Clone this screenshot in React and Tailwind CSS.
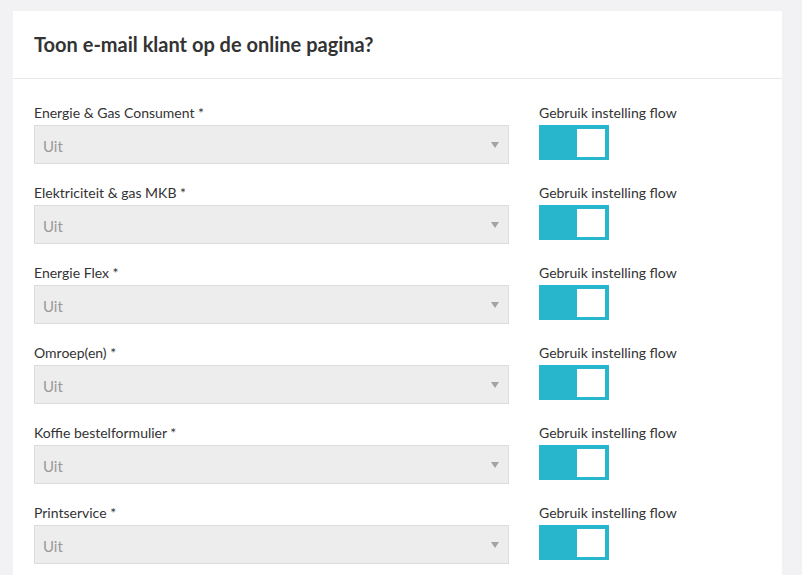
import React from "react";

const rows = [
  "Energie & Gas Consument *",
  "Elektriciteit & gas MKB *",
  "Energie Flex *",
  "Omroep(en) *",
  "Koffie bestelformulier *",
  "Printservice *",
];

function Row({ label }) {
  return (
    <div className="flex h-[80px]">
      <div className="w-[475px] flex flex-col">
        <div className="h-[14px] text-[14px] leading-[14px] text-[#333] mb-[5px] mt-[-1px] whitespace-nowrap">{label}</div>
        <div className="h-[39px] border border-[#dcdcdc] bg-[#ededed] flex items-center justify-between pl-[8px] pr-[9px]">
          <span className="text-[15px] text-[#999] mt-[3px]">Uit</span>
          <svg width="8" height="6" viewBox="0 0 8 6"><path d="M0 0H8L4 6Z" fill="#a3a3a3" /></svg>
        </div>
      </div>
      <div className="ml-[30px] flex flex-col">
        <div className="h-[14px] text-[14px] leading-[14px] text-[#333] mb-[5px] mt-[-1px] whitespace-nowrap">Gebruik instelling flow</div>
        <div className="w-[70px] h-[35px] bg-[#27b6cc] flex justify-end items-start pt-[4px] pr-[4px]">
          <div className="w-[28px] h-[28px] bg-white" />
        </div>
      </div>
    </div>
  );
}

export default function App() {
  return (
    <div className="w-[802px] h-[575px] overflow-hidden bg-[#f2f2f4] pt-[11px] pl-[13px] pr-[20px]" style={{ fontFamily: "Lato, 'Open Sans', sans-serif" }}>
      <div className="bg-white w-[769px] h-[600px]">
        <div className="h-[68px] border-b border-[#e6e6e6] pl-[21px] flex items-center">
          <h1 className="text-[20px] font-bold text-[#333] mt-[-2px]">Toon e-mail klant op de online pagina?</h1>
        </div>
        <div className="pl-[21px] pt-[28px]">
          {rows.map((r) => (
            <Row key={r} label={r} />
          ))}
        </div>
      </div>
    </div>
  );
}
